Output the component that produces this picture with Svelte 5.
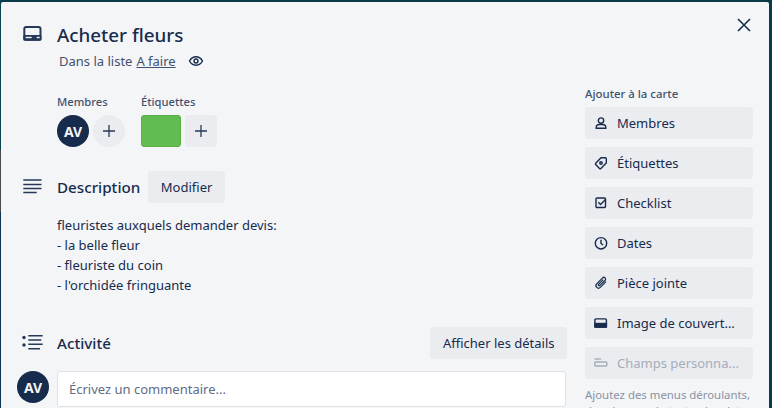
<script>
  const actions = [
    { label: 'Membres', icon: 'user' },
    { label: 'Étiquettes', icon: 'tag' },
    { label: 'Checklist', icon: 'check' },
    { label: 'Dates', icon: 'clock' },
    { label: 'Pièce jointe', icon: 'clip' },
    { label: 'Image de couvert...', icon: 'cover' },
    { label: 'Champs personna...', icon: 'fields', disabled: true }
  ];

  const lines = ['fleuristes auxquels demander devis:', '- la belle fleur', '- fleuriste du coin', "- l'orchidée fringuante"];
</script>

<div class="page">
  <div class="modal">
    <button class="close" aria-label="Fermer">
      <svg width="14" height="14" viewBox="0 0 14 14"><path d="M1 1l12 12M13 1L1 13" stroke="#172b4d" stroke-width="1.6" fill="none" /></svg>
    </button>

    <header class="head">
      <svg class="sec-icon" width="20" height="20" viewBox="0 0 20 20">
        <rect x="2.3" y="5" width="16.2" height="12.7" rx="2" fill="none" stroke="#253858" stroke-width="2" />
        <rect x="1.3" y="13" width="18.2" height="5.7" rx="1.5" fill="#253858" />
        <rect x="3.7" y="14.8" width="6" height="1.4" fill="#f4f5f7" />
        <rect x="14.7" y="14.8" width="3" height="1.4" fill="#f4f5f7" />
      </svg>
      <div>
        <h1>Acheter fleurs</h1>
        <p class="sub">
          Dans la liste <u>A faire</u>
          <svg class="eye" width="16" height="16" viewBox="0 0 16 16">
            <path d="M1.5 8C3 5.200 5.300 3.800 8 3.800s5 1.400 6.500 4.200C13 10.800 10.700 12.200 8 12.200S3 10.800 1.500 8z" fill="none" stroke="#172b4d" stroke-width="1.4" />
            <circle cx="8" cy="8" r="2" fill="none" stroke="#172b4d" stroke-width="1.4" />
          </svg>
        </p>
      </div>
    </header>

    <div class="columns">
      <main class="left">
        <div class="meta">
          <div>
            <h3>Membres</h3>
            <div class="row">
              <span class="avatar">AV</span>
              <button class="plus round" aria-label="Ajouter un membre">
                <svg width="14" height="14" viewBox="0 0 14 14"><path d="M7 1v12M1 7h12" stroke="#253858" stroke-width="1.3" /></svg>
              </button>
            </div>
          </div>
          <div>
            <h3>Étiquettes</h3>
            <div class="row">
              <span class="label"></span>
              <button class="plus" aria-label="Ajouter une étiquette">
                <svg width="14" height="14" viewBox="0 0 14 14"><path d="M7 1v12M1 7h12" stroke="#253858" stroke-width="1.3" /></svg>
              </button>
            </div>
          </div>
        </div>

        <section class="desc">
          <div class="sec-head">
            <svg class="sec-icon" width="20" height="20" viewBox="0 0 20 20">
              <path d="M1.300 3h18.200M1.300 7.500h18.200M1.300 11.500h18.200M1.300 15.500h13.400" stroke="#253858" stroke-width="1.6" />
            </svg>
            <h2>Description</h2>
            <button class="btn">Modifier</button>
          </div>
          <div class="body">
            {#each lines as line}
              <p>{line}</p>
            {/each}
          </div>
        </section>

        <section class="activity">
          <div class="sec-head">
            <svg class="sec-icon wide" width="20" height="20" viewBox="0 0 20 20">
              <circle cx="2" cy="4.500" r="1.700" fill="#253858" />
              <circle cx="2" cy="12" r="1.700" fill="#253858" />
              <path d="M6.300 2.700h14.400M6.300 7h13M6.300 11.300h14.400M6.300 15.700h11.700" stroke="#253858" stroke-width="1.500" />
            </svg>
            <h2>Activité</h2>
            <button class="btn details">Afficher les détails</button>
          </div>
          <div class="comment">
            <span class="avatar">AV</span>
            <div class="input">Écrivez un commentaire...</div>
          </div>
        </section>
      </main>

      <aside class="side">
        <h3>Ajouter à la carte</h3>
        {#each actions as a}
          <button class="action" class:disabled={a.disabled}>
            <svg width="16" height="16" viewBox="0 0 16 16" fill="none" stroke="currentColor" stroke-width="1.4">
              {#if a.icon === 'user'}
                <circle cx="8" cy="5.600" r="2.700" />
                <path d="M3.200 13.300v-.8C3.200 10.500 5 9.500 6.500 9.500h3c1.500 0 3.300 1 3.300 3v.8z" />
              {:else if a.icon === 'tag'}
                <path d="M8 2.700h4.300a1 1 0 0 1 1 1V8l-5.400 5.400a1 1 0 0 1-1.400 0L2.700 9.600a1 1 0 0 1 0-1.400z" />
                <circle cx="8" cy="8" r="1.200" />
              {:else if a.icon === 'check'}
                <rect x="3" y="3" width="9.500" height="9.500" rx="1" />
                <path d="M5.300 7.300l2.200 2.300 5-5.100" />
              {:else if a.icon === 'clock'}
                <circle cx="8" cy="8.300" r="5.700" />
                <path d="M8 4.800v3.700l2.200 1.500" />
              {:else if a.icon === 'clip'}
                <path d="M13 6.700L7.300 12.400a2.500 2.500 0 0 1-3.600-3.600l5.900-5.900a1.700 1.700 0 0 1 2.500 2.400L6.700 10.600a.8.800 0 0 1-1.200-1.200L10.200 4.700" stroke-width="1.200" />
              {:else if a.icon === 'cover'}
                <rect x="1.900" y="3.900" width="11.500" height="8.200" rx="1" />
                <rect x="1.900" y="8.500" width="11.500" height="3.600" fill="currentColor" />
              {:else}
                <path d="M1.500 4h6.500" />
                <rect x="1.800" y="7" width="12" height="4" rx=".8" />
              {/if}
            </svg>
            <span>{a.label}</span>
          </button>
        {/each}
        <p class="hint">Ajoutez des menus déroulants, des champs de texte, des dates et bien plus à vos cartes.</p>
      </aside>
    </div>
  </div>
</div>

<style>
  :global(body) {
    margin: 0;
    overflow: hidden;
  }

  .page {
    width: 772px;
    height: 408px;
    overflow: hidden;
    background:
      linear-gradient(#0a4452 0 150px, #4a4a4a 150px 212px, #0c3350 212px) left top / 1px 100% no-repeat,
      #0a3a4a;
    padding: 2px 3px 0 1px;
    box-sizing: border-box;
    font-family: 'Noto Sans', sans-serif;
    color: #172b4d;
    font-size: 13px;
  }

  .modal {
    position: relative;
    background: #f4f5f7;
    height: 500px;
    border-radius: 2px;
    padding: 20px 0 0 21px;
    box-sizing: border-box;
  }

  .close {
    position: absolute;
    top: 8px;
    right: 1px;
    width: 48px;
    height: 32px;
    background: none;
    border: 0;
    padding: 0;
  }

  h1 {
    margin: 0;
    font-size: 18.8px;
    line-height: 26px;
    font-weight: 500;
  }

  h2 {
    margin: 0;
    font-size: 15.2px;
    line-height: 20px;
    font-weight: 500;
  }

  h3 {
    margin: 0 0 5px;
    font-size: 11.2px;
    line-height: 16px;
    font-weight: 500;
    color: #42526e;
  }

  p {
    margin: 0;
  }

  .head {
    display: flex;
    gap: 15px;
  }

  .sec-icon {
    flex: none;
  }

  .wide {
    overflow: visible;
  }

  .sub {
    display: flex;
    align-items: center;
    gap: 4px;
    margin: 3px 0 0 2px;
    line-height: 20px;
    color: #42526e;
  }

  .eye {
    margin-left: 8px;
  }

  .columns {
    display: flex;
    margin-top: 15px;
  }

  .left {
    width: 545px;
    flex: none;
  }

  .meta {
    display: flex;
    gap: 16px;
    padding: 8px 0 0 35px;
  }

  .row {
    display: flex;
    gap: 4px;
  }

  .avatar {
    width: 32px;
    height: 32px;
    border-radius: 50%;
    background: #172b4d;
    color: #f4f5f7;
    font-weight: 700;
    font-size: 14px;
    display: flex;
    align-items: center;
    justify-content: center;
    flex: none;
  }

  .plus {
    width: 32px;
    height: 32px;
    border: 0;
    border-radius: 3px;
    background: #ebecf0;
    display: flex;
    align-items: center;
    justify-content: center;
    padding: 0;
  }

  .round {
    border-radius: 50%;
  }

  .label {
    width: 40px;
    height: 32px;
    box-sizing: border-box;
    background: #61bd4f;
    border-radius: 3px;
    border: 1px solid #5aac44;
  }

  .desc {
    margin-top: 24px;
  }

  .sec-head {
    display: flex;
    align-items: center;
    height: 32px;
  }

  .sec-head h2 {
    margin-left: 15px;
  }

  .btn {
    height: 32px;
    padding: 0 12.5px;
    margin-left: 8px;
    border: 0;
    border-radius: 3px;
    background: #ebecf0;
    color: #172b4d;
    font: inherit;
  }

  .details {
    margin-left: auto;
  }

  .body {
    padding: 12px 0 0 35px;
    line-height: 20px;
  }

  .activity {
    margin-top: 32px;
  }

  .comment {
    display: flex;
    align-items: flex-start;
    gap: 8px;
    margin: 12px 1px 0 -5px;
  }

  .input {
    flex: 1;
    height: 36px;
    box-sizing: border-box;
    background: #fff;
    border: 1px solid #dfe1e6;
    border-radius: 3px;
    padding: 0 11px;
    line-height: 34px;
    color: #5e6c84;
  }

  .side {
    width: 168px;
    margin-left: 18px;
    flex: none;
  }

  .side h3 {
    font-size: 11.4px;
  }

  .action {
    display: flex;
    align-items: center;
    gap: 8px;
    width: 168px;
    height: 32px;
    margin-bottom: 8px;
    padding: 0 8px;
    border: 0;
    border-radius: 3px;
    background: #ebecf0;
    color: #172b4d;
    font: inherit;
    white-space: nowrap;
  }

  .action svg {
    flex: none;
  }

  .disabled {
    color: #a5adba;
  }

  .hint {
    font-size: 11.4px;
    line-height: 16px;
    color: #8993a4;
  }
</style>
